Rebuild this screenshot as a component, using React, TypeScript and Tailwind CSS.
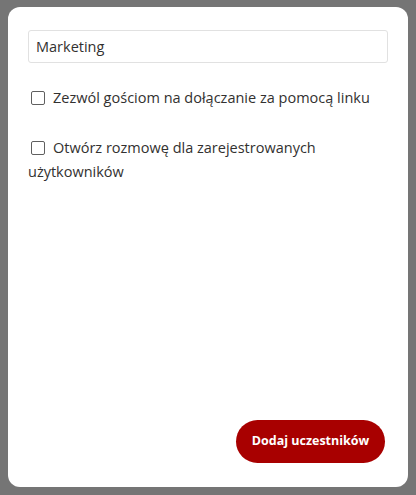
import React from "react";

const Option = ({ label }: { label: string }) => (
  <label className="block text-[14.5px] leading-[24px] text-[#323130]">
    <input
      type="checkbox"
      className="appearance-none inline-block w-[14px] h-[14px] border border-[#5f5f5f] rounded-[2px] bg-white align-[-2px] ml-[3px] mr-[8px]"
    />
    {label}
  </label>
);

export default function App() {
  return (
    <div
      className="min-h-screen bg-[#757575] pt-[7px] pl-[8px]"
      style={{ fontFamily: '"Open Sans", "Noto Sans", sans-serif' }}
    >
      <div className="w-[400px] h-[480px] bg-white rounded-[12px] px-[20px] pt-[23px] pb-[24px] flex flex-col">
        <input
          defaultValue="Marketing"
          className="w-[360px] h-[33px] border border-[#e1e1e1] rounded-[3px] px-[7px] text-[14.5px] text-[#323130] outline-none"
        />
        <div className="mt-[23px]">
          <Option label="Zezwól gościom na dołączanie za pomocą linku" />
        </div>
        <div className="mt-[26px] w-[340px]">
          <Option label="Otwórz rozmowę dla zarejestrowanych użytkowników" />
        </div>
        <div className="flex-1" />
        <div className="flex justify-end pr-[3px]">
          <button className="h-[43px] w-[149px] rounded-full bg-[#a80000] text-white text-[12.5px] font-bold">
            Dodaj uczestników
          </button>
        </div>
      </div>
    </div>
  );
}
